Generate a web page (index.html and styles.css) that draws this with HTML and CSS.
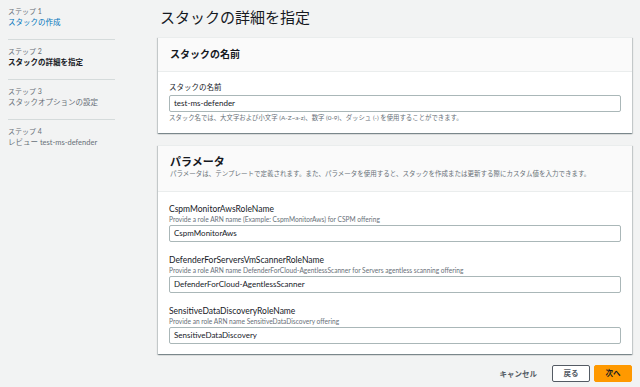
FILE: index.html
```html
<!DOCTYPE html>
<html lang="ja">
<head>
<meta charset="UTF-8">
<meta name="viewport" content="width=device-width, initial-scale=1.0">
<title>スタックの詳細を指定</title>
<link rel="stylesheet" href="styles.css">
</head>
<body>

<div class="page">
  <nav class="steps">
    <div class="step">
      <div class="step-label">ステップ 1</div>
      <div class="step-title link">スタックの作成</div>
    </div>
    <div class="step">
      <div class="step-label">ステップ 2</div>
      <div class="step-title current">スタックの詳細を指定</div>
    </div>
    <div class="step">
      <div class="step-label">ステップ 3</div>
      <div class="step-title">スタックオプションの設定</div>
    </div>
    <div class="step last">
      <div class="step-label">ステップ 4</div>
      <div class="step-title">レビュー test-ms-defender</div>
    </div>
  </nav>

  <main class="main">
    <h1 class="page-title">スタックの詳細を指定</h1>

    <section class="card">
      <div class="card-header">
        <h2 class="card-title">スタックの名前</h2>
      </div>
      <div class="card-body">
        <div class="field-label">スタックの名前</div>
        <div class="input">test-ms-defender</div>
        <div class="help">スタック名では、大文字および小文字 (A-Z~a-z)、数字 (0-9)、ダッシュ (-) を使用することができます。</div>
      </div>
    </section>

    <section class="card params">
      <div class="card-header">
        <h2 class="card-title">パラメータ</h2>
        <div class="card-desc">パラメータは、テンプレートで定義されます。また、パラメータを使用すると、スタックを作成または更新する際にカスタム値を入力できます。</div>
      </div>
      <div class="card-body">
        <div class="field">
          <div class="field-label latin">CspmMonitorAwsRoleName</div>
          <div class="field-desc">Provide a role ARN name (Example: CspmMonitorAws) for CSPM offering</div>
          <div class="input">CspmMonitorAws</div>
        </div>
        <div class="field">
          <div class="field-label latin">DefenderForServersVmScannerRoleName</div>
          <div class="field-desc">Provide a role ARN name DefenderForCloud-AgentlessScanner for Servers agentless scanning offering</div>
          <div class="input">DefenderForCloud-AgentlessScanner</div>
        </div>
        <div class="field">
          <div class="field-label latin">SensitiveDataDiscoveryRoleName</div>
          <div class="field-desc">Provide an role ARN name SensitiveDataDiscovery offering</div>
          <div class="input">SensitiveDataDiscovery</div>
        </div>
      </div>
    </section>

    <div class="actions">
      <span class="btn-link">キャンセル</span>
      <span class="btn">戻る</span>
      <span class="btn primary">次へ</span>
    </div>
  </main>
</div>

</body>
</html>
```

FILE: styles.css
```css
body {
  margin: 0;
  background-color: #f2f3f3;
  color: #16191f;
  font-family: "Lato", "Noto Sans CJK JP", sans-serif;
}

.page {
  display: flex;
  padding: 0 8px;
}

/* left step list */
.steps {
  width: 107px;
  flex-shrink: 0;
}

.step {
  padding: 6px 0 10px;
  border-bottom: 1px solid #d5dbdb;
}

.step.last {
  border-bottom: none;
}

.step-label {
  font-size: 7px;
  line-height: 10px;
  color: #687078;
}

.step-title {
  margin-top: 1px;
  font-size: 7.5px;
  line-height: 12px;
  color: #687078;
}

.step-title.link {
  color: #0073bb;
}

.step-title.current {
  color: #16191f;
  font-weight: bold;
}

/* main column */
.main {
  flex: 1;
  margin-left: 43px;
}

.page-title {
  margin: 0;
  padding: 6px 0 0 2px;
  height: 31px;
  font-size: 15px;
  line-height: 22px;
  font-weight: normal;
}

.card {
  background: #fff;
  box-shadow: 0 1px 1px 0 rgba(0, 28, 36, 0.3), 1px 1px 1px 0 rgba(0, 28, 36, 0.15), -1px 1px 1px 0 rgba(0, 28, 36, 0.15);
  border-top: 1px solid #eaeded;
}

.card-header {
  background: #fafafa;
  border-bottom: 1px solid #eaeded;
  height: 33px;
  padding: 0 12px;
}

.card-title {
  margin: 0;
  font-size: 10px;
  line-height: 33px;
  font-weight: bold;
}

.card-body {
  padding: 10px 11px 10px;
}

.field-label {
  font-size: 7.5px;
  line-height: 12px;
  margin-bottom: 1px;
}

.field-label.latin {
  font-size: 8.5px;
  margin-bottom: 0;
}

.input {
  height: 15px;
  border: 1px solid #aab7b8;
  border-radius: 2px;
  padding: 0 4px;
  font-size: 8px;
  line-height: 15px;
  background: #fff;
}

.help {
  margin-top: 1px;
  font-size: 6.4px;
  line-height: 10px;
  color: #687078;
}

/* parameter card */
.params {
  margin-top: 12px;
}

.params .card-header {
  height: auto;
  padding: 9px 12px 12px;
}

.params .card-title {
  font-size: 11px;
  line-height: 14px;
}

.card-desc {
  font-size: 6.5px;
  line-height: 10px;
  color: #687078;
}

.params .card-body {
  padding: 11px 11px 10px;
}

.field + .field {
  margin-top: 12px;
}

.field-desc {
  font-size: 6.6px;
  line-height: 8px;
  margin-bottom: 2px;
  color: #687078;
}

/* footer buttons */
.actions {
  display: flex;
  justify-content: flex-end;
  align-items: center;
  margin-top: 11px;
}

.btn-link {
  font-size: 7.5px;
  font-weight: bold;
  color: #545b64;
  margin-right: 15px;
}

.btn {
  width: 36px;
  height: 15px;
  border: 1px solid #545b64;
  border-radius: 2px;
  background: #fff;
  font-size: 7.5px;
  font-weight: bold;
  line-height: 15px;
  text-align: center;
  color: #545b64;
}

.btn.primary {
  margin-left: 4px;
  border-color: #ff9900;
  background: #ff9900;
  color: #16191f;
}
```
